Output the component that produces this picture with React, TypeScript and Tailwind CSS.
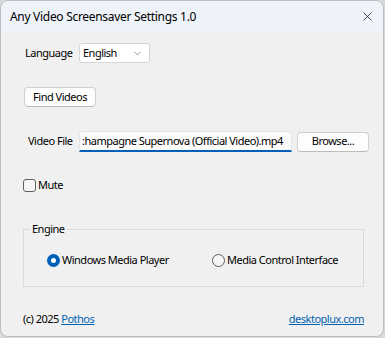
import { X, ChevronDown } from "lucide-react";

const font = { fontFamily: '"Noto Sans", "Open Sans", sans-serif' };

export default function App() {
  return (
    <div className="w-[385px] h-[338px] bg-[#d9d9d9] text-[11px] tracking-[-0.5px] text-black whitespace-nowrap" style={font}>
      <div className="w-[384px] h-[337px] rounded-lg border border-[#bdbdbd] bg-[#f0f0f0] overflow-hidden flex flex-col">
        {/* title bar */}
        <div className="h-[31px] shrink-0 bg-[#eef3f9] flex items-center justify-between pl-[9px] pr-[8px]">
          <span className="text-[12px] tracking-[-0.3px]">Any Video Screensaver Settings 1.0</span>
          <X size={15} strokeWidth={1.2} className="text-[#1a1a1a]" />
        </div>

        <div className="flex flex-col pl-[22px] pr-[21px]">
          {/* language */}
          <div className="flex items-center mt-[11px] h-[20px]">
            <span className="ml-[2px] w-[54px] shrink-0">Language</span>
            <div className="w-[71px] shrink-0 h-[20px] bg-white border border-[#d5d5d5] rounded-[3px] flex items-center justify-between pl-[3px] pr-[6px]">
              <span>English</span>
              <ChevronDown size={11} strokeWidth={1.3} className="text-[#555]" />
            </div>
          </div>

          {/* find videos */}
          <div className="mt-[24px]">
            <button className="w-[72px] h-[20px] bg-[#fdfdfd] border border-[#d0d0d0] border-b-[#bcbcbc] rounded-[4px] flex items-center justify-center ml-[1px]">
              Find Videos
            </button>
          </div>

          {/* video file */}
          <div className="flex items-center mt-[24px] h-[21px]">
            <span className="ml-[5px] w-[51px] shrink-0">Video File</span>
            <div className="w-[213px] shrink-0 h-[21px] bg-[#fbfbfb] border border-[#e5e5e5] border-b-2 border-b-[#005fb8] rounded-t-[3px] overflow-hidden flex items-center pl-[2px]">
              <span>:hampagne Supernova (Official Video).mp4</span>
            </div>
            <button className="ml-[5px] shrink-0 w-[72px] h-[20px] bg-[#fdfdfd] border border-[#d0d0d0] border-b-[#bcbcbc] rounded-[4px] flex items-center justify-center">
              Browse...
            </button>
          </div>

          {/* mute */}
          <div className="flex items-center mt-[26px] h-[14px]">
            <div className="w-[13px] h-[13px] border border-[#5f5f5f] rounded-[3px] bg-[#f5f5f5]" />
            <span className="ml-[2px]">Mute</span>
          </div>

          {/* engine group */}
          <div className="relative mt-[37px] h-[58px] border border-[#dadada] w-[341px]">
            <span className="absolute -top-[9px] left-[6px] px-[2px] bg-[#f0f0f0] leading-[16px]">Engine</span>
            <div className="flex items-center mt-[22px] pl-[23px]">
              <div className="w-[13px] h-[13px] shrink-0 rounded-full bg-[#005fb8] flex items-center justify-center">
                <div className="w-[5px] h-[5px] rounded-full bg-white" />
              </div>
              <span className="ml-[2px] w-[150px] shrink-0">Windows Media Player</span>
              <div className="w-[13px] h-[13px] shrink-0 rounded-full border border-[#5f5f5f] bg-[#f5f5f5]" />
              <span className="ml-[2px]">Media Control Interface</span>
            </div>
          </div>

          {/* footer */}
          <div className="flex items-center justify-between mt-[24px] w-[341px]">
            <span>
              (c) 2025 <a className="text-[#0063b1] underline">Pothos</a>
            </span>
            <a className="text-[#0063b1] underline">desktoplux.com</a>
          </div>
        </div>
      </div>
    </div>
  );
}
